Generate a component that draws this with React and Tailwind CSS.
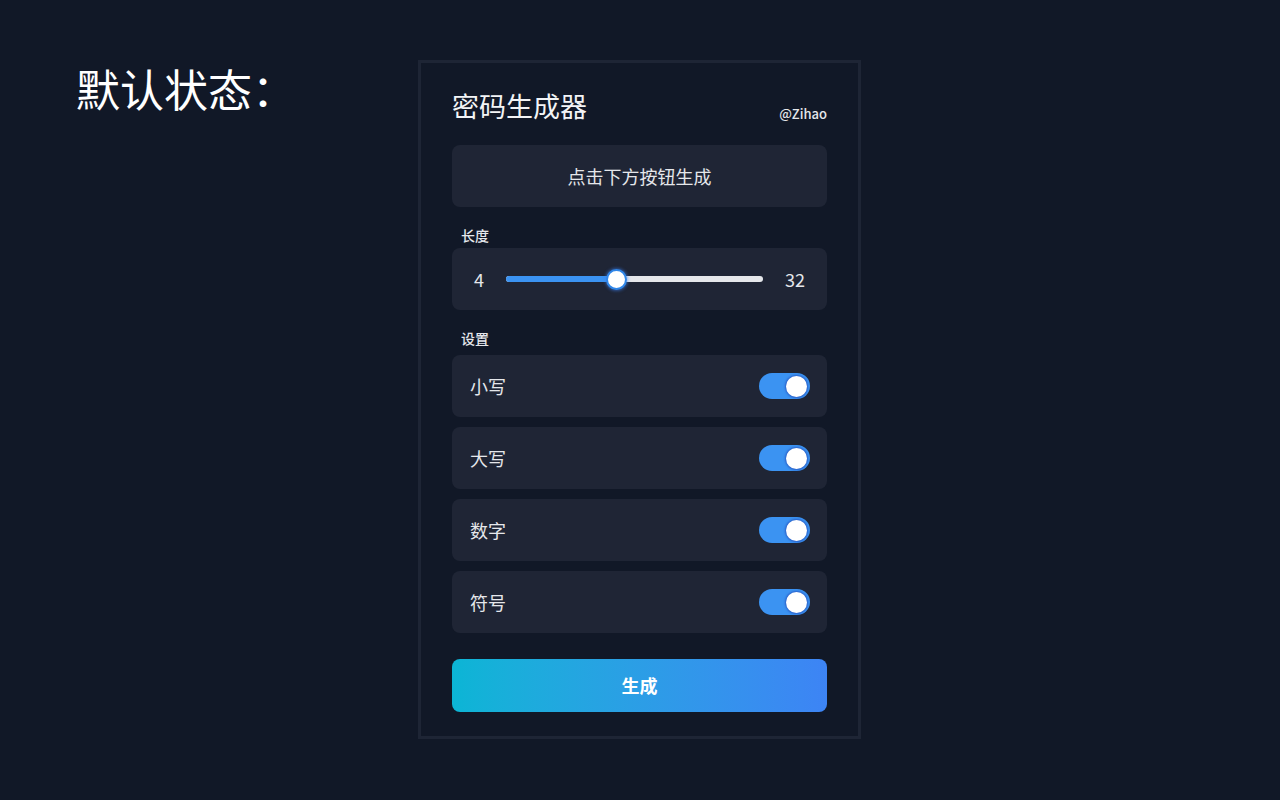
import React, { useState } from "react";

const font = { fontFamily: '"Noto Sans CJK SC", "Noto Sans", sans-serif' };

function Toggle({ on, onChange }) {
  return (
    <button
      type="button"
      onClick={() => onChange(!on)}
      className={`relative w-[51px] h-[26px] rounded-full flex items-center px-[3px] ${
        on ? "bg-[#3b93f2] justify-end" : "bg-gray-600 justify-start"
      }`}
    >
      <span className="block w-[21px] h-[21px] rounded-full bg-white shadow-[0_0_2px_1px_rgba(30,64,175,0.6)]" />
    </button>
  );
}

export default function App() {
  const [length, setLength] = useState(16);
  const [opts, setOpts] = useState({ lower: true, upper: true, num: true, sym: true });
  const [pwd, setPwd] = useState("");

  const rows = [
    { key: "lower", label: "小写" },
    { key: "upper", label: "大写" },
    { key: "num", label: "数字" },
    { key: "sym", label: "符号" },
  ];

  function generate() {
    let chars = "";
    if (opts.lower) chars += "abcdefghijklmnopqrstuvwxyz";
    if (opts.upper) chars += "ABCDEFGHIJKLMNOPQRSTUVWXYZ";
    if (opts.num) chars += "0123456789";
    if (opts.sym) chars += "!@#$%^&*()_+-=";
    if (!chars) return;
    let out = "";
    for (let i = 0; i < length; i++) out += chars[Math.floor(Math.random() * chars.length)];
    setPwd(out);
  }

  const pct = ((length - 4) / 28) * 100;

  return (
    <div className="min-h-screen bg-[#111827] flex items-start pt-[60px]" style={font}>
      {/* Left heading */}
      <div className="w-[418px] pl-[76px] pt-[2px]">
        <h1 className="text-[44px] leading-[53px] text-white">默认状态：</h1>
      </div>

      {/* Card */}
      <div className="w-[443px] border-[3px] border-[#1e2535] bg-[#111827] px-[31px] pt-[26px] pb-[24px]">
        <div className="flex items-end justify-between">
          <h2 className="text-[27px] leading-[34px] text-gray-100">密码生成器</h2>
          <span className="text-[13px] leading-[20px] font-medium text-gray-200 -mb-[1px]">@Zihao</span>
        </div>

        <div className="mt-[22px] h-[62px] rounded-lg bg-[#1f2535] flex items-center justify-center">
          <span className="text-[18px] text-gray-200">{pwd || "点击下方按钮生成"}</span>
        </div>

        <div className="mt-[19px] pl-[9px] text-[14px] leading-[18px] font-medium text-gray-200">长度</div>
        <div className="mt-[4px] h-[62px] rounded-lg bg-[#1f2535] flex items-center px-[22px] gap-[22px]">
          <span className="text-[18px] text-gray-200 w-[10px]">4</span>
          <div className="relative flex-1 h-[6px] rounded-full bg-[#e5e7eb]">
            <div className="absolute left-0 top-0 h-full rounded-full bg-[#3b93f2]" style={{ width: `${pct}%` }} />
            <div
              className="absolute top-1/2 w-[21px] h-[21px] -ml-[10px] -mt-[10.5px] rounded-full bg-white border-2 border-[#2f86e8] shadow-[0_0_3px_1px_rgba(59,130,246,0.5)]"
              style={{ left: `${pct}%` }}
            />
            <input
              type="range"
              min={4}
              max={32}
              value={length}
              onChange={(e) => setLength(Number(e.target.value))}
              className="absolute inset-0 w-full opacity-0 cursor-pointer -top-2 h-[22px]"
            />
          </div>
          <span className="text-[18px] text-gray-200">32</span>
        </div>

        <div className="mt-[19px] pl-[9px] text-[14px] leading-[18px] font-medium text-gray-200">设置</div>
        <div className="mt-[8px] flex flex-col gap-[10px]">
          {rows.map((r) => (
            <div
              key={r.key}
              className="h-[62px] rounded-lg bg-[#1f2535] flex items-center justify-between pl-[18px] pr-[17px]"
            >
              <span className="text-[18px] text-gray-200">{r.label}</span>
              <Toggle on={opts[r.key]} onChange={(v) => setOpts({ ...opts, [r.key]: v })} />
            </div>
          ))}
        </div>

        <button
          type="button"
          onClick={generate}
          className="mt-[26px] w-full h-[53px] rounded-lg bg-gradient-to-r from-[#0bb5d5] to-[#3d84f5] text-white text-[18px] font-bold"
        >
          生成
        </button>
      </div>
    </div>
  );
}
